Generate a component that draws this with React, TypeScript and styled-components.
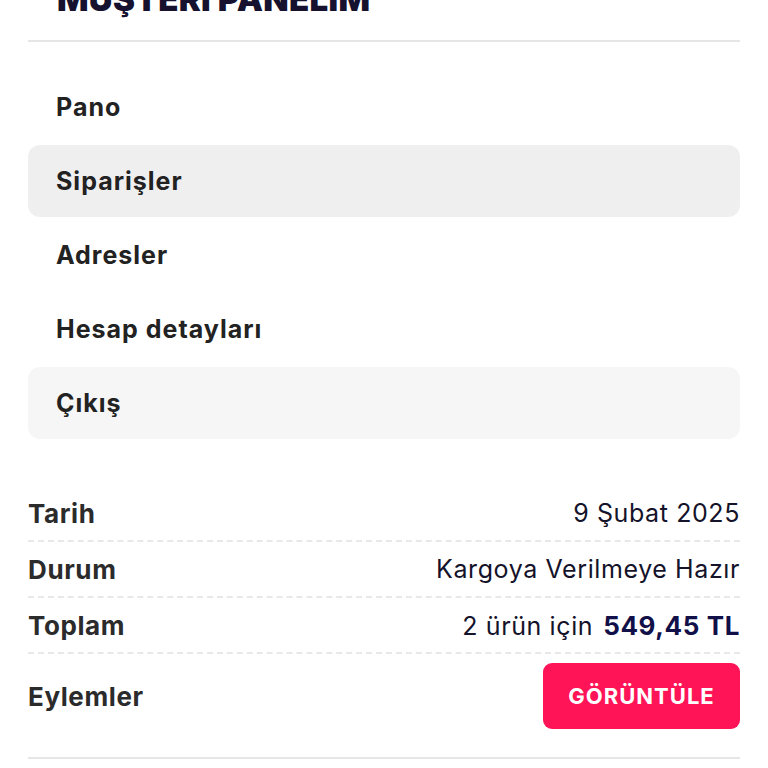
import * as React from 'react'
import styled, { createGlobalStyle } from 'styled-components'

const GlobalStyle = createGlobalStyle`
  html, body {
    margin: 0;
    padding: 0;
    background: #ffffff;
    overflow: hidden;
  }
  body {
    font-family: Inter, "Noto Sans", sans-serif;
    -webkit-font-smoothing: antialiased;
  }
`

const Page = styled.div`
  padding: 0 28px;
  margin-top: -21px;
`
const Header = styled.div`
  border-bottom: 2px solid #e6e6e6;
  padding: 0 0 21px 29px;
`
const Title = styled.h1`
  margin: 0;
  font-family: Inter, sans-serif;
  font-size: 33px;
  line-height: 40px;
  font-weight: 900;
  color: #15112e;
  letter-spacing: 0.3px;
`
const Menu = styled.nav`
  display: flex;
  flex-direction: column;
  gap: 2px;
  margin-top: 29px;
`
const MenuItem = styled.a<{ $bg?: string }>`
  display: flex;
  align-items: center;
  height: 72px;
  padding: 0 28px;
  border-radius: 12px;
  background: ${props => props.$bg || 'transparent'};
  font-size: 25px;
  font-weight: 700;
  letter-spacing: 1px;
  color: #222222;
  text-decoration: none;
`
const Table = styled.div`
  margin-top: 47px;
  display: flex;
  flex-direction: column;
`
const Row = styled.div`
  display: flex;
  align-items: center;
  justify-content: space-between;
  height: 54px;
  border-bottom: 2px dashed #e8e8e8;
`
const ActionRow = styled.div`
  display: flex;
  align-items: center;
  justify-content: space-between;
  padding: 9px 0 28px;
  border-bottom: 2px solid #e6e6e6;
`
const Label = styled.div`
  font-size: 26px;
  font-weight: 700;
  letter-spacing: 0.6px;
  color: #2b2b2b;
`
const Value = styled.div`
  display: flex;
  align-items: baseline;
  gap: 10px;
  font-size: 25px;
  font-weight: 400;
  letter-spacing: 0.6px;
  color: #14132a;
`
const Price = styled.span`
  font-size: 26px;
  font-weight: 700;
  color: #121048;
`
const Button = styled.button`
  width: 197px;
  height: 66px;
  border: none;
  border-radius: 9px;
  background: #ff1457;
  color: #ffffff;
  font-family: Inter, sans-serif;
  font-size: 22px;
  font-weight: 700;
  letter-spacing: 1px;
  cursor: pointer;
`

const MENU = [
  { label: 'Pano' },
  { label: 'Siparişler', bg: '#efefef' },
  { label: 'Adresler' },
  { label: 'Hesap detayları' },
  { label: 'Çıkış', bg: '#f6f6f6' },
]

export default function App() {
  return (
    <>
      <GlobalStyle />
      <Page>
        <Header>
          <Title>MÜŞTERİ PANELİM</Title>
        </Header>
        <Menu>
          {MENU.map(item => (
            <MenuItem key={item.label} href="#" $bg={item.bg}>{item.label}</MenuItem>
          ))}
        </Menu>
        <Table>
          <Row>
            <Label>Tarih</Label>
            <Value>9 Şubat 2025</Value>
          </Row>
          <Row>
            <Label>Durum</Label>
            <Value>Kargoya Verilmeye Hazır</Value>
          </Row>
          <Row>
            <Label>Toplam</Label>
            <Value>2 ürün için <Price>549,45 TL</Price></Value>
          </Row>
          <ActionRow>
            <Label>Eylemler</Label>
            <Button>GÖRÜNTÜLE</Button>
          </ActionRow>
        </Table>
      </Page>
    </>
  )
}
